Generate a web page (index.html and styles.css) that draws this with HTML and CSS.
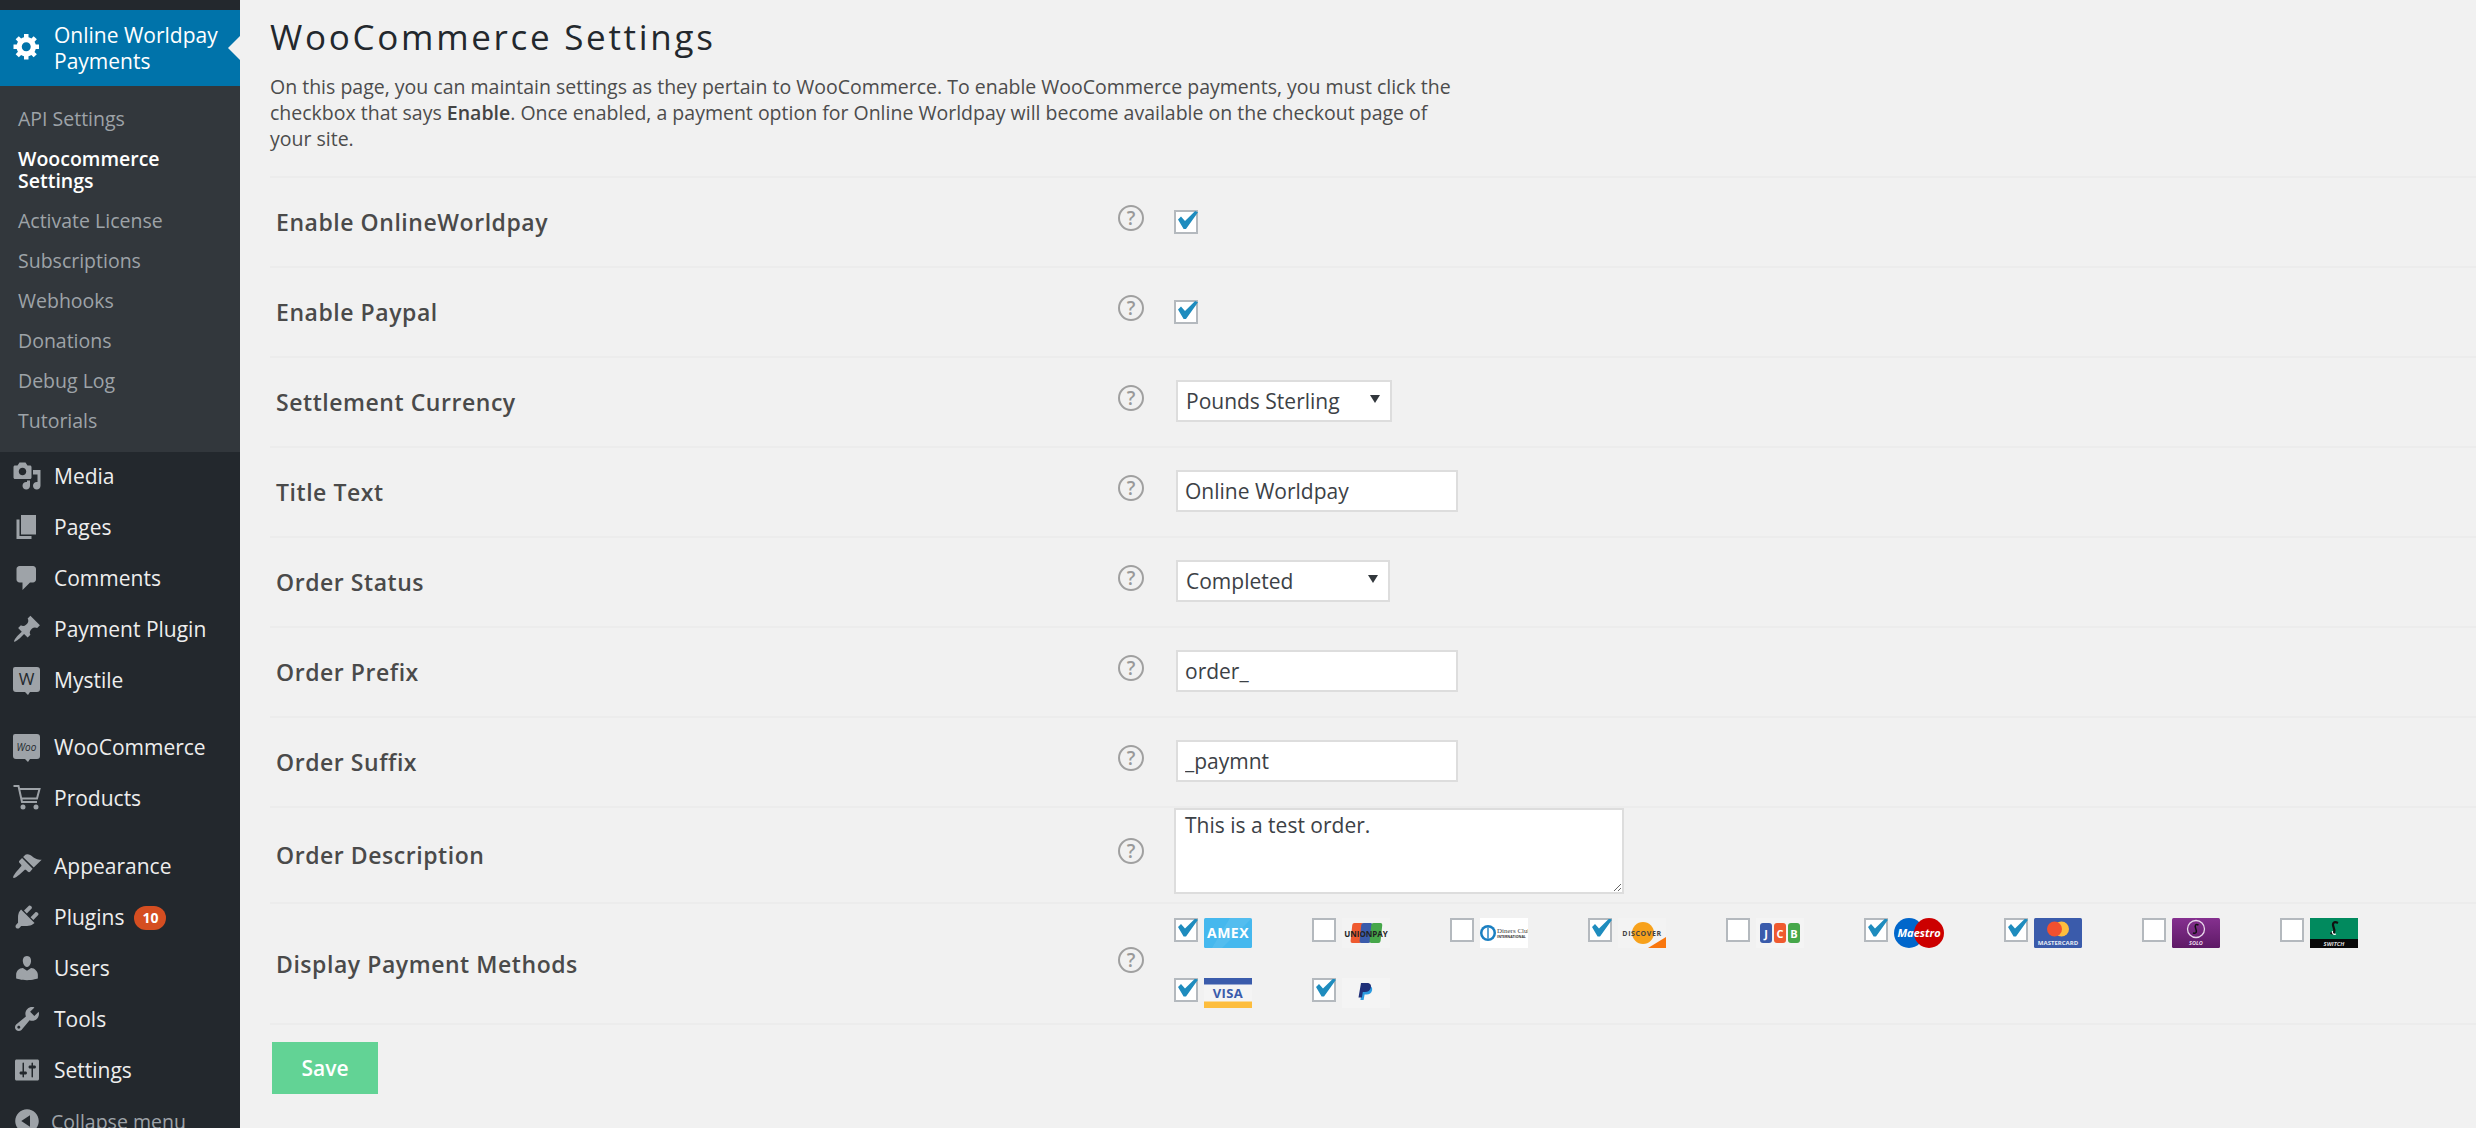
FILE: index.html
```html
<!DOCTYPE html>
<html lang="en">
<head>
<meta charset="utf-8">
<title>WooCommerce Settings</title>
<link rel="stylesheet" href="styles.css">
</head>
<body>
<div class="page">
<aside class="sidebar">
  <a class="active-item">
    <svg class="ico ico-white" viewBox="0 0 20 20"><path d="M18 12h-2.18c-.17.7-.44 1.35-.81 1.93l1.54 1.54-2.1 2.1-1.54-1.54c-.58.36-1.23.63-1.91.79V19H8v-2.18c-.68-.16-1.33-.43-1.91-.79l-1.54 1.54-2.12-2.12 1.54-1.54c-.36-.58-.63-1.23-.79-1.91H1V9.03h2.17c.16-.7.44-1.35.8-1.94L2.43 5.55l2.1-2.1 1.54 1.54c.58-.37 1.24-.64 1.93-.81V2h3v2.18c.68.16 1.33.43 1.91.79l1.54-1.54 2.12 2.12-1.54 1.54c.36.59.64 1.24.8 1.94H18V12zm-8.5 1.5c1.66 0 3-1.34 3-3s-1.34-3-3-3-3 1.34-3 3 1.34 3 3 3z"/></svg>
    <span>Online Worldpay Payments</span>
  </a>
  <ul class="submenu">
    <li>API Settings</li>
    <li class="current">Woocommerce Settings</li>
    <li>Activate License</li>
    <li>Subscriptions</li>
    <li>Webhooks</li>
    <li>Donations</li>
    <li>Debug Log</li>
    <li>Tutorials</li>
  </ul>
  <ul class="menu">
    <li><svg class="ico" viewBox="0 0 20 20"><path d="M13 11V4c0-.55-.45-1-1-1h-1.67L9 1H5L3.67 3H2c-.55 0-1 .45-1 1v7c0 .55.45 1 1 1h10c.55 0 1-.45 1-1zM7 4.5c1.38 0 2.5 1.12 2.5 2.5S8.38 9.5 7 9.5 4.5 8.38 4.5 7 5.62 4.5 7 4.5zM14 6h5v10.5c0 1.38-1.12 2.5-2.5 2.5S14 17.88 14 16.5s1.12-2.5 2.5-2.5c.17 0 .34.02.5.05V9h-3V6zm-4 8.05V13h2v3.5c0 1.38-1.12 2.5-2.5 2.5S7 17.88 7 16.5 8.12 14 9.5 14c.17 0 .34.02.5.05z"/></svg>Media</li>
    <li><svg class="ico" viewBox="0 0 20 20"><path d="M6 15V2h10v13H6zm-1 1h8v2H3V5h2v11z"/></svg>Pages</li>
    <li><svg class="ico" viewBox="0 0 20 20"><path d="M5 2h9c1.1 0 2 .9 2 2v7c0 1.1-.9 2-2 2h-2l-5 5v-5H5c-1.1 0-2-.9-2-2V4c0-1.1.9-2 2-2z"/></svg>Comments</li>
    <li><svg class="ico" viewBox="0 0 20 20"><path d="M10.44 3.02l1.82-1.82 6.36 6.35-1.83 1.82c-1.05-.68-2.48-.57-3.41.36l-.75.75c-.92.93-1.04 2.35-.35 3.41l-1.83 1.82-2.41-2.41-2.8 2.79c-.42.42-3.38 2.71-3.8 2.29s1.86-3.39 2.28-3.81l2.79-2.79L4.1 9.36l1.83-1.82c1.05.69 2.48.57 3.4-.36l.75-.75c.93-.92 1.05-2.35.36-3.41z"/></svg>Payment Plugin</li>
    <li class="sep-after"><svg class="ico" viewBox="0 0 30 30"><path d="M3 2h22a3 3 0 0 1 3 3v19a3 3 0 0 1-3 3h-7l-2 3-3-3H4a3 3 0 0 1-3-3V4a2 2 0 0 1 2-2z"/><text class="woo-w" x="14.5" y="20" text-anchor="middle">W</text></svg>Mystile</li>
    <li><svg class="ico" viewBox="0 0 30 30"><path d="M3 2h22a3 3 0 0 1 3 3v19a3 3 0 0 1-3 3h-7l-2 3-3-3H4a3 3 0 0 1-3-3V4a2 2 0 0 1 2-2z"/><text class="woo-t" x="14.5" y="18.5" text-anchor="middle">Woo</text></svg>WooCommerce</li>
    <li class="sep-after sep-wide"><svg class="ico ico-line" viewBox="0 0 30 30"><path d="M1.5 3h5l3.500 16h15M7.500 6h20l-2.500 9.500H9.500"/><circle cx="11" cy="24" r="1.500"/><circle cx="24" cy="24" r="1.500"/></svg>Products</li>
    <li><svg class="ico" viewBox="0 0 20 20"><path d="M14.480 11.060L7.410 3.990l1.500-1.500c.5-.56 2.300-.47 3.510.32 1.210.8 1.430 1.280 2.910 2.100 1.180.64 2.450 1.260 4.450.85zm-.71.71L6.700 4.700 4.930 6.470c-.39.39-.39 1.020 0 1.410l1.060 1.060c.39.39.39 1.030 0 1.420-.6.6-6.100 6.500-5.100 7.500 1 1 6.700-4.500 7.300-5.100.39-.39 1.020-.39 1.410 0l1.060 1.060c.39.39 1.020.39 1.410 0z"/></svg>Appearance</li>
    <li><svg class="ico" viewBox="0 0 20 20"><path d="M13.110 4.360L9.870 7.600 8 5.730l3.240-3.240c.35-.34 1.050-.2 1.560.32.52.51.66 1.210.31 1.550zm-8 1.770l.91-1.120 9.010 9.010-1.190.84c-.71.71-2.630 1.160-3.820 1.160H6.140L4.900 17.260c-.59.59-1.540.59-2.120 0-.59-.58-.59-1.530 0-2.120l1.240-1.240v-3.880c0-1.130.4-3.190 1.090-3.890zm7.260 3.970l3.240-3.240c.34-.35 1.040-.21 1.550.31.520.51.66 1.210.31 1.550l-3.240 3.250z"/></svg>Plugins<span class="badge">10</span></li>
    <li><svg class="ico" viewBox="0 0 20 20"><path d="M10 9.250c-2.270 0-2.730-3.440-2.730-3.440C7 4.020 7.820 2 9.970 2c2.160 0 2.980 2.020 2.710 3.810 0 0-.41 3.440-2.680 3.440zm0 2.570L12.720 10c2.390 0 4.520 2.330 4.520 4.530v2.490s-3.650 1.130-7.240 1.130c-3.650 0-7.240-1.130-7.240-1.130v-2.490c0-2.250 1.940-4.480 4.470-4.480z"/></svg>Users</li>
    <li><svg class="ico" viewBox="0 0 20 20"><path d="M16.680 9.770c-1.340 1.340-3.300 1.670-4.950.99l-5.410 6.520c-.99.99-2.590.99-3.580 0s-.99-2.590 0-3.570l6.520-5.420c-.68-1.650-.35-3.610.99-4.950 1.280-1.280 3.120-1.620 4.720-1.060l-2.890 2.890 2.820 2.820 2.860-2.870c.53 1.580.18 3.390-1.080 4.650zM3.810 16.210c.4.39 1.040.39 1.430 0 .4-.4.4-1.040 0-1.430-.39-.4-1.030-.4-1.430 0-.39.39-.39 1.030 0 1.430z"/></svg>Tools</li>
    <li><svg class="ico" viewBox="0 0 20 20"><path d="M18 16V4c0-.55-.45-1-1-1H3c-.55 0-1 .45-1 1v12c0 .55.45 1 1 1h14c.55 0 1-.45 1-1zM8 11h1c.55 0 1 .45 1 1s-.45 1-1 1H8v1.500c0 .28-.22.5-.5.5s-.5-.22-.5-.5V13H6c-.55 0-1-.45-1-1s.45-1 1-1h1V5.500c0-.28.22-.5.5-.5s.5.22.5.5V11zm5-2h-1c-.55 0-1-.45-1-1s.45-1 1-1h1V5.500c0-.28.22-.5.5-.5s.5.22.5.5V7h1c.55 0 1 .45 1 1s-.45 1-1 1h-1v5.500c0 .28-.22.5-.5.5s-.5-.22-.5-.5V9z"/></svg>Settings</li>
    <li class="collapse"><svg class="ico" viewBox="0 0 20 20"><path d="M10 2.160c4.330 0 7.840 3.510 7.840 7.840s-3.510 7.840-7.840 7.840S2.160 14.330 2.160 10 5.710 2.160 10 2.160zm2 11.720V6.120L6.180 9.970z"/></svg>Collapse menu</li>
  </ul>
</aside>

<main class="content">
  <h1 class="title">WooCommerce Settings</h1>
  <p class="intro">On this page, you can maintain settings as they pertain to WooCommerce. To enable WooCommerce payments, you must click the checkbox that says <strong>Enable</strong>. Once enabled, a payment option for Online Worldpay will become available on the checkout page of your site.</p>

  <div class="rows">
    <div class="row"><label class="lab">Enable OnlineWorldpay</label><span class="help">?</span><div><input class="cb" type="checkbox" checked></div></div>
    <div class="row"><label class="lab">Enable Paypal</label><span class="help">?</span><div><input class="cb" type="checkbox" checked></div></div>
    <div class="row"><label class="lab">Settlement Currency</label><span class="help">?</span><div class="sel-wrap sel-a"><select class="sel"><option>Pounds Sterling</option></select></div></div>
    <div class="row"><label class="lab">Title Text</label><span class="help">?</span><input class="txt" type="text" value="Online Worldpay"></div>
    <div class="row"><label class="lab">Order Status</label><span class="help">?</span><div class="sel-wrap sel-b"><select class="sel"><option>Completed</option></select></div></div>
    <div class="row"><label class="lab">Order Prefix</label><span class="help">?</span><input class="txt" type="text" value="order_"></div>
    <div class="row"><label class="lab">Order Suffix</label><span class="help">?</span><input class="txt" type="text" value="_paymnt"></div>
    <div class="row row-desc"><label class="lab">Order Description</label><span class="help">?</span><textarea class="area">This is a test order.</textarea></div>
    <div class="row row-pay"><label class="lab">Display Payment Methods</label><span class="help">?</span>
      <div class="cards">
        <div class="card"><input class="cb" type="checkbox" checked>
          <svg class="logo" viewBox="0 0 48 30"><rect width="48" height="30" rx="1.500" fill="#45b8ee"/><path d="M26 0h22L18 30H8z" fill="#fff" opacity=".08"/><text class="l-b" x="24" y="20" font-size="14" fill="#fff" letter-spacing=".5">AMEX</text></svg></div>
        <div class="card"><input class="cb" type="checkbox">
          <svg class="logo" viewBox="0 0 48 30"><rect width="48" height="30" fill="#f3f3f3"/><rect x="11" y="5" width="11" height="20" rx="2" fill="#ef5a2f" transform="skewX(-6)"/><rect x="20" y="5" width="11" height="20" rx="2" fill="#3a5bab" transform="skewX(-6)"/><rect x="30" y="5" width="11" height="20" rx="2" fill="#46a74a" transform="skewX(-6)"/><text class="l-b" x="24" y="19" font-size="8" fill="#222">UNIONPAY</text></svg></div>
        <div class="card"><input class="cb" type="checkbox">
          <svg class="logo" viewBox="0 0 48 30"><rect width="48" height="30" fill="#fff"/><circle cx="8" cy="15" r="8" fill="#1a7fc1"/><circle cx="8" cy="15" r="5.500" fill="#fff"/><rect x="7.300" y="9.500" width="1.400" height="11" fill="#1a7fc1"/><text class="l-s" x="17" y="15" font-size="7" fill="#444">Diners Club</text><text class="l-b l-start" x="17" y="20" font-size="3.500" fill="#333">INTERNATIONAL</text></svg></div>
        <div class="card"><input class="cb" type="checkbox" checked>
          <svg class="logo" viewBox="0 0 48 30"><rect width="48" height="30" fill="#f3f3f3"/><circle cx="25" cy="15" r="11" fill="#f7a11b"/><path d="M30 30L48 19v11z" fill="#f9770e"/><text class="l-b" x="24" y="17.800" font-size="7" fill="#444" letter-spacing=".6">DISCOVER</text></svg></div>
        <div class="card"><input class="cb" type="checkbox">
          <svg class="logo" viewBox="0 0 48 30"><rect width="48" height="30" fill="#f4f4f4"/><rect x="4" y="5" width="12" height="20" rx="3" fill="#3a5bab"/><rect x="18" y="5" width="12" height="20" rx="3" fill="#ef5a2f"/><rect x="32" y="5" width="12" height="20" rx="3" fill="#46a74a"/><text class="l-b" x="10" y="19.500" font-size="11" fill="#fff">J</text><text class="l-b" x="24" y="19.500" font-size="11" fill="#fff">C</text><text class="l-b" x="38" y="19.500" font-size="11" fill="#fff">B</text></svg></div>
        <div class="card"><input class="cb" type="checkbox" checked>
          <svg class="logo logo-wide" viewBox="0 0 50 30"><circle cx="15" cy="15" r="15" fill="#0066cb"/><circle cx="35" cy="15" r="15" fill="#cc0000"/><text class="l-b l-i" x="25" y="19" font-size="11" fill="#fff">Maestro</text></svg></div>
        <div class="card"><input class="cb" type="checkbox" checked>
          <svg class="logo" viewBox="0 0 48 30"><rect width="48" height="30" rx="1.500" fill="#3a5bab"/><circle cx="27.500" cy="11" r="7.500" fill="#fdbd3d"/><circle cx="20.500" cy="11" r="7.500" fill="#f1502f"/><text class="l-b" x="24" y="26.500" font-size="6" fill="#e6ebf5">MASTERCARD</text></svg></div>
        <div class="card"><input class="cb" type="checkbox">
          <svg class="logo" viewBox="0 0 48 30"><defs><linearGradient id="sologr" x1="0" y1="0" x2="0" y2="1"><stop offset="0" stop-color="#85308f"/><stop offset="1" stop-color="#5e1a66"/></linearGradient></defs><rect width="48" height="30" rx="1.500" fill="url(#sologr)"/><circle cx="24" cy="11" r="8.500" fill="none" stroke="#e8d8ea" stroke-width="1.300"/><path d="M26.500 7c-3-1.500-4 .5-2.800 3.500s1 5.500-2.700 4.500" fill="none" stroke="#111" stroke-width="1.500"/><text class="l-b l-i" x="24" y="27" font-size="5.500" fill="#e8d8ea">SOLO</text></svg></div>
        <div class="card"><input class="cb" type="checkbox">
          <svg class="logo" viewBox="0 0 48 30"><rect width="48" height="21" fill="#018a5e"/><rect y="21" width="48" height="9" fill="#0a0a0a"/><path d="M28 5c-4-2-6 0-4.500 4s1.500 7.500-3 6" fill="none" stroke="#111" stroke-width="2.200"/><path d="M22.500 13c-.5 2 .5 4 3.500 3" fill="none" stroke="#fff" stroke-width="1.200"/><text class="l-b l-i" x="24" y="28" font-size="5.800" fill="#ddd">SWITCH</text></svg></div>
        <div class="card"><input class="cb" type="checkbox" checked>
          <svg class="logo" viewBox="0 0 48 30"><rect width="48" height="30" fill="#f4f4f4"/><rect width="48" height="6.500" fill="#3a5bab"/><rect y="23.500" width="48" height="6.500" fill="#fdbd3d"/><text class="l-b" x="24" y="20" font-size="13" fill="#3a5bab" letter-spacing=".4">VISA</text></svg></div>
        <div class="card"><input class="cb" type="checkbox" checked>
          <svg class="logo" viewBox="0 0 48 30"><rect width="48" height="30" fill="#f4f4f4"/><path d="M21 8h5.500c2.800 0 4.200 1.600 3.600 4.200-.7 3-2.800 4.300-5.500 4.300h-2l-1 5.500h-3.200z" fill="#2a9adf"/><path d="M19 5h6c3 0 4.500 1.600 3.900 4.400-.7 3.300-3 4.600-5.900 4.600h-2.200l-.9 5.500H16.500z" fill="#1f2f78"/></svg></div>
      </div>
    </div>
  </div>
  <button class="save" type="button">Save</button>
</main>
</div>
</body>
</html>
```
FILE: styles.css
```css
* { box-sizing: border-box; }
html, body { margin: 0; padding: 0; height: 100%; overflow: hidden; }
body { background: #f1f1f1; font-family: "Open Sans", sans-serif; color: #444; }
.page { display: flex; height: 1128px; overflow: hidden; }

/* sidebar */
.sidebar { width: 240px; flex: none; background: #23282d; padding-top: 10px; color: #eee; font-size: 21px; }
.ico { width: 30px; height: 30px; flex: none; fill: #9ea3a8; margin-right: 12px; }
.ico-white { fill: #fff; margin-top: 9px; }
.ico-line { fill: none; stroke: #9ea3a8; stroke-width: 2; }
.ico-line circle { fill: #9ea3a8; }
.woo-w { font: 400 17px "Open Sans", sans-serif; fill: #23282d; stroke: none; }
.woo-t { font: 400 10px "Open Sans", sans-serif; fill: #23282d; stroke: none; font-style: italic; }
.active-item { display: flex; height: 76px; padding: 12px 10px 0 12px; background: #0073aa; color: #fff; line-height: 26px; position: relative; }
.active-item::after { content: ""; position: absolute; right: 0; top: 26px; border: 12px solid transparent; border-right-color: #f1f1f1; border-left-width: 0; }
.submenu, .menu { list-style: none; margin: 0; padding: 0; }
.submenu { background: #32373c; height: 366px; padding-top: 22px; font-size: 19.500px; color: #9ea3a8; }
.submenu li { padding: 0 18px; line-height: 22px; margin-bottom: 18px; }
.submenu .current { color: #fff; font-weight: 600; }
.menu li { display: flex; align-items: center; height: 51px; padding-left: 12px; padding-bottom: 3px; white-space: nowrap; }
.menu .sep-after { margin-bottom: 16px; }
.menu .sep-wide { margin-bottom: 17px; }
.badge { display: inline-block; width: 32px; height: 24px; margin-left: 10px; margin-top: 2px; border-radius: 12px; background: #d54e21; color: #fff; font-size: 14px; font-weight: 700; line-height: 24px; text-align: center; }
.menu .collapse { color: #9ea3a8; font-size: 19.500px; }
.collapse .ico { margin-right: 9px; margin-left: 0; }

/* content */
.content { flex: 1; min-width: 0; padding: 0 0 0 30px; }
.title { margin: 0; padding-top: 14px; font-size: 35px; line-height: 46px; font-weight: 400; color: #23282d; letter-spacing: 2.700px; }
.intro { width: 1200px; margin: 14px 0 0; font-size: 19.500px; line-height: 26px; color: #4c4c4c; }
.intro strong { font-weight: 600; color: #444; }
.rows { margin-top: 24px; border-top: 2px solid #ececec; }
.row { display: grid; grid-template-columns: 848px 56px 1fr; align-items: center; height: 90px; border-bottom: 2px solid #ececec; }
.row-desc { height: 96px; }
.row-pay { height: 121px; }
.lab { padding-left: 6px; font-size: 23px; font-weight: 600; color: #4a4a4a; letter-spacing: .55px; }
.help { display: block; width: 26px; height: 26px; margin-bottom: 8px; border: 2px solid #a0a0a0; border-radius: 50%; color: #999; font-size: 19px; font-weight: 600; line-height: 22px; text-align: center; }

.cb { display: block; position: relative; appearance: none; width: 24px; height: 24px; margin: 0; border: 2px solid #b4b9be; background: #fff; flex: none; }
.cb:checked::before { content: ""; position: absolute; left: 2px; top: -1px; width: 20px; height: 20px; background: #1e8cbe; clip-path: polygon(0 42%, 15% 28%, 35% 50%, 86% 0, 100% 6%, 40% 90%, 28% 90%); }

.sel-wrap { position: relative; margin-left: 2px; margin-bottom: 2px; }
.sel-a { width: 216px; }
.sel-b { width: 214px; }
.sel-wrap::after { content: ""; position: absolute; right: 12px; top: 15px; border: 5px solid transparent; border-top: 8px solid #32373c; border-bottom: 0; }
.sel { display: block; appearance: none; width: 100%; height: 42px; padding: 0 0 0 8px; border: 2px solid #ddd; border-radius: 0; background: #fff; font: 400 21px "Open Sans", sans-serif; color: #3c4146; }
.txt { display: block; width: 282px; height: 42px; margin-left: 2px; margin-bottom: 2px; padding: 0 7px; border: 2px solid #ddd; background: #fff; font: 400 21px "Open Sans", sans-serif; color: #3c4146; outline: 0; }
.area { display: block; width: 450px; height: 86px; margin-bottom: 8px; padding: 2px 9px; border: 2px solid #ddd; border-radius: 0; background: #fff; font: 400 21px/26px "Open Sans", sans-serif; color: #3c4146; }

.cards { display: flex; flex-wrap: wrap; column-gap: 60px; row-gap: 30px; width: 1280px; margin-bottom: 2px; }
.card { display: flex; align-items: flex-start; gap: 6px; }
.logo { display: block; width: 48px; height: 30px; flex: none; }
.logo-wide { width: 50px; }
.logo text { text-anchor: middle; }
.l-b { font-family: "Open Sans", sans-serif; font-weight: 700; }
.l-s { font-family: "Liberation Serif", serif; text-anchor: start !important; }
.l-start { text-anchor: start !important; }
.l-i { font-style: italic; }

.save { display: block; width: 106px; height: 52px; margin: 17px 0 0 2px; padding: 0; border: 0; background: #62d395; color: #fff; font: 600 21px "Open Sans", sans-serif; }
```
